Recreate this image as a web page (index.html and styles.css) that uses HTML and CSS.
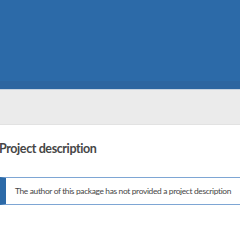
FILE: index.html
```html
<!DOCTYPE html>
<html lang="en">
<head>
    <meta charset="UTF-8">
    <meta name="viewport" content="width=device-width, initial-scale=1.0">
    <title>Project description</title>
    <link rel="stylesheet" href="styles.css">
</head>
<body>
    <div class="banner">
        <div class="banner-strip"></div>
    </div>
    <div class="tabs"></div>
    <div class="content">
        <h2>Project description</h2>
        <div class="callout">
            The author of this package has not provided a project description
        </div>
    </div>
</body>
</html>
```

FILE: styles.css
```css
body {
    margin: 0;
    font-family: 'Lato', sans-serif;
    background-color: #fff;
    overflow: hidden;
}

.banner {
    height: 89px;
    background-color: #2c6aa8;
    display: flex;
    flex-direction: column;
    justify-content: flex-end;
    border-bottom: 1px solid #c6d2e0;
}

.banner-strip {
    height: 8px;
    background-color: #2d65a0;
}

.tabs {
    height: 34px;
    background-color: #ebebeb;
    border-bottom: 1px solid #e2e2e2;
}

.content {
    overflow: hidden;
}

h2 {
    margin: 16px 0 0 -1px;
    font-size: 12.5px;
    font-weight: 700;
    color: #464646;
    line-height: 16px;
    letter-spacing: -0.4px;
}

.callout {
    margin: 20px -20px 0 0;
    height: 26px;
    display: flex;
    align-items: center;
    padding-left: 9px;
    border: 1px solid #7ea6d4;
    border-left: 6px solid #2c6aa8;
    font-size: 8.4px;
    color: #464646;
    white-space: nowrap;
    letter-spacing: -0.34px;
}
```
